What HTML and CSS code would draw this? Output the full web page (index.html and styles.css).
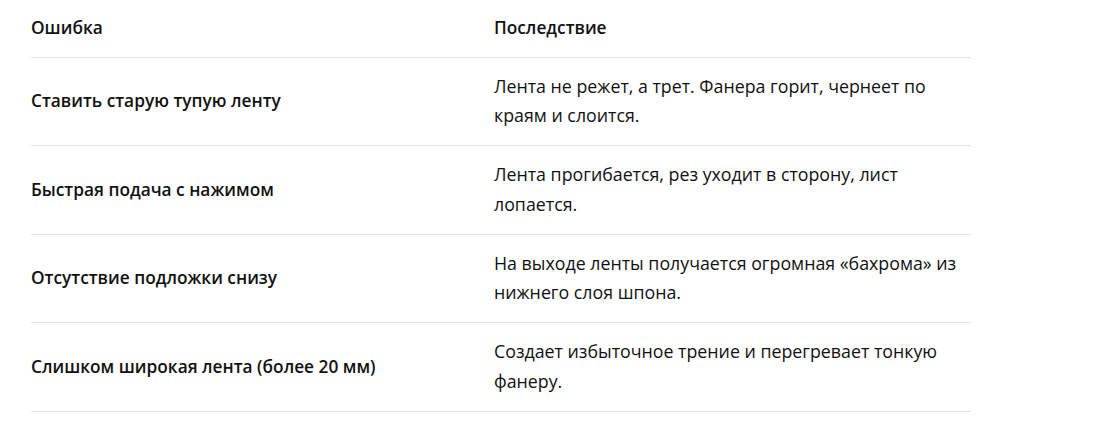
FILE: index.html
```html
<!DOCTYPE html>
<html lang="ru">
<head>
<meta charset="utf-8">
<link rel="stylesheet" href="styles.css">
</head>
<body>
<table class="tbl">
  <thead>
    <tr><th class="c1">Ошибка</th><th class="c2">Последствие</th></tr>
  </thead>
  <tbody>
    <tr><td class="c1">Ставить старую тупую ленту</td><td class="c2">Лента не режет, а трет. Фанера горит, чернеет по краям и слоится.</td></tr>
    <tr><td class="c1">Быстрая подача с нажимом</td><td class="c2">Лента прогибается, рез уходит в сторону, лист лопается.</td></tr>
    <tr><td class="c1">Отсутствие подложки снизу</td><td class="c2">На выходе ленты получается огромная «бахрома» из нижнего слоя шпона.</td></tr>
    <tr><td class="c1">Слишком широкая лента (более 20 мм)</td><td class="c2">Создает избыточное трение и перегревает тонкую фанеру.</td></tr>
  </tbody>
</table>
</body>
</html>
```

FILE: styles.css
```css
html, body { margin: 0; padding: 0; background: #fff; }
body { padding: 0 136px 0 31px; font-family: "Open Sans", "Noto Sans", sans-serif; color: #111; }
.tbl { width: 940px; border-collapse: collapse; table-layout: fixed; font-size: 17.8px; line-height: 29.5px; }
.tbl th, .tbl td { padding: 14px 0 14.5px; text-align: left; vertical-align: middle; border-bottom: 1px solid #e3e3e3; }
.tbl th { padding-top: 13px; padding-bottom: 14px; }
.tbl .c1 { width: 463px; font-weight: 600; font-size: 17.3px; }
.tbl th.c2 { font-weight: 600; font-size: 17.3px; }
.tbl td.c2 { font-weight: 400; }
```
